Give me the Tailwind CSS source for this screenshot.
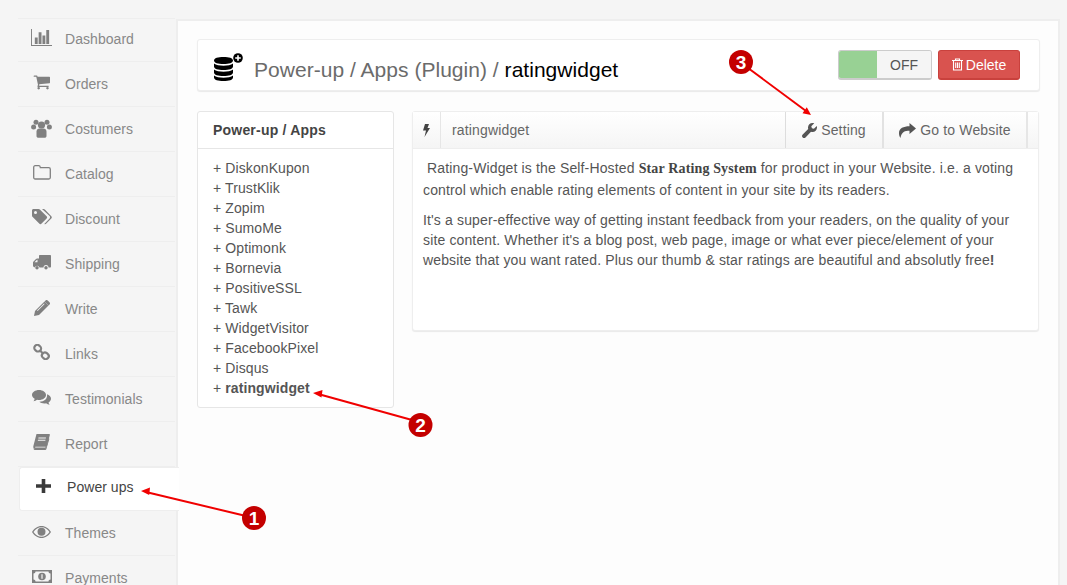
<!DOCTYPE html>
<html lang="en">
<head>
    <title>Power-up / Apps</title>
    <meta charset="utf-8"/>
    <meta name="viewport" content="width=device-width, initial-scale=1">
    <script src="https://cdn.jsdelivr.net/npm/@tailwindcss/browser@4"></script>
</head>
<body class="relative h-[585px] w-[1067px] overflow-hidden bg-[#f5f5f5] font-['Liberation_Sans',Arial,sans-serif] text-sm text-[#555]">
<div class="flex h-full items-start">
    <!-- sidebar -->
    <div class="w-[175px] shrink-0 pl-[18px] pt-[18px] tracking-[0.05px] text-[#888]">
        <div class="flex h-[44px] items-center border-y border-[#eee] pb-[2px]">
            <div class="flex w-[47px] justify-center">
                <svg class="mb-[3px] h-[17px] w-[21px]" viewBox="0 0 22 16" preserveAspectRatio="none" fill="#808080"><path d="M0 0h1v15h21v1H0z"/><path d="M4 8h3v6H4zM8 3h3v11H8zM12 6h3v8h-3zM16 1h3v13h-3z"/></svg>
            </div>
            <span>Dashboard</span>
        </div>
        <div class="flex h-[45px] items-center border-b border-[#eee] pb-[1px]">
            <div class="flex w-[47px] justify-center">
                <svg class="mb-[2px] h-[15px] w-[17px]" viewBox="0 256 1728 1408" fill="#808080"><path d="M704 1536q0 52-38 90t-90 38-90-38-38-90 38-90 90-38 90 38 38 90zm896 0q0 52-38 90t-90 38-90-38-38-90 38-90 90-38 90 38 38 90zm128-1088v512q0 24-16.5 42.5t-40.5 21.5l-1044 122q13 60 13 70 0 16-24 64h920q26 0 45 19t19 45-19 45-45 19h-1024q-26 0-45-19t-19-45q0-11 8-31.5t16-36 21.5-40 15.5-29.5l-177-823h-204q-26 0-45-19t-19-45 19-45 45-19h256q16 0 28.5 6.5t19.5 15.5 13 24.5 8 26 5.5 29.5 4.5 26h1201q26 0 45 19t19 45z"/></svg>
            </div>
            <span>Orders</span>
        </div>
        <div class="flex h-[45px] items-center border-b border-[#eee] pb-[1px]">
            <div class="flex w-[47px] justify-center">
                <svg class="mb-[1px] h-[19px] w-[21px]" viewBox="0 0 21 19" fill="#808080"><circle cx="5" cy="3.200" r="2.500"/><circle cx="16" cy="3.200" r="2.500"/><circle cx="10.500" cy="6" r="3.600"/><circle cx="2.600" cy="8" r="2.500"/><circle cx="18.400" cy="8" r="2.500"/><path d="M5.500 12.500c0-2 1.500-3 3-3h4c1.500 0 3 1 3 3V17c0 1-.8 1.800-2 1.800h-6c-1.200 0-2-.8-2-1.800z"/></svg>
            </div>
            <span>Costumers</span>
        </div>
        <div class="flex h-[45px] items-center border-b border-[#eee] pb-[1px]">
            <div class="flex w-[47px] justify-center">
                <svg class="mb-[3px] h-[15px] w-[18px]" viewBox="0 0 18 15" fill="none" stroke="#808080" stroke-width="1.300"><path d="M.7 12.500V2.200C.7 1.300 1.300.7 2.200.7h3.600c.8 0 1.300.5 1.400 1.300l.1.700h8.500c.9 0 1.500.6 1.500 1.500v8.300c0 .9-.6 1.500-1.500 1.500H2.200c-.9 0-1.500-.6-1.500-1.500z"/></svg>
            </div>
            <span>Catalog</span>
        </div>
        <div class="flex h-[45px] items-center border-b border-[#eee] pb-[1px]">
            <div class="flex w-[47px] justify-center">
                <svg class="mb-[3px] h-[16px] w-[20px]" viewBox="0 0 20 16" fill="#808080"><path d="M0 1.500C0 .6.600 0 1.500 0h5c.7 0 1.200.3 1.600.7l6.500 6.500c.7.700.7 1.700 0 2.400l-5 5c-.7.700-1.700.7-2.400 0L.7 8.100C.3 7.700 0 7.200 0 6.500zM3.500 2A1.500 1.500 0 1 0 3.500 5 1.500 1.500 0 0 0 3.500 2z"/><path d="M10 0h1.500c.7 0 1.200.3 1.600.7l6.200 6.500c.7.700.7 1.700 0 2.400l-5 5c-.6.600-1.400.7-2 .3l5.300-5.400c.7-.7.700-1.700 0-2.400z"/></svg>
            </div>
            <span>Discount</span>
        </div>
        <div class="flex h-[45px] items-center border-b border-[#eee] pb-[1px]">
            <div class="flex w-[47px] justify-center">
                <svg class="mb-[3px] h-[15px] w-[18px]" viewBox="0 0 18 15" fill="#808080"><path fill-rule="evenodd" d="M6 1c0-.6.4-1 1-1h10c.6 0 1 .4 1 1v10.500c0 .6-.4 1-1 1h-1.500a2.500 2.500 0 0 0-5 0H6.500a2.500 2.500 0 0 0-4.700-.2C.8 12.300 0 11.700 0 10.800V7.500c0-.5.200-.8.500-1.100L3 4c.3-.3.600-.5 1.100-.5H6zM1.500 7.200h3V4.800H4z"/><circle cx="4" cy="12.800" r="1.700"/><circle cx="13" cy="12.800" r="1.700"/></svg>
            </div>
            <span>Shipping</span>
        </div>
        <div class="flex h-[45px] items-center border-b border-[#eee] pb-[1px]">
            <div class="flex w-[47px] justify-center">
                <svg class="mb-[2px] h-[16px] w-[16px]" viewBox="0 0 16 16" fill="#808080"><path d="M0 16l1-5L10.500 1.500l4 4L5 15z"/><path d="M11.500.5c.7-.7 1.500-.7 2.200 0l1.800 1.800c.7.7.7 1.500 0 2.200l-.9.9-4-4z"/><path d="M3 10.500l7-7 .6.600-7 7z" fill="#f5f5f5"/></svg>
            </div>
            <span>Write</span>
        </div>
        <div class="flex h-[45px] items-center border-b border-[#eee] pb-[1px]">
            <div class="flex w-[47px] justify-center">
                <svg class="mb-[3px] h-[16px] w-[17px]" viewBox="0 0 17 16" fill="none" stroke="#808080" stroke-width="2.200"><rect x="1.200" y="1.200" width="7" height="6" rx="3" transform="rotate(40 4.700 4.200)"/><rect x="8.800" y="8.800" width="7" height="6" rx="3" transform="rotate(40 12.300 11.800)"/><path d="M6.500 6l4 4"/></svg>
            </div>
            <span>Links</span>
        </div>
        <div class="flex h-[45px] items-center border-b border-[#eee] pb-[1px]">
            <div class="flex w-[47px] justify-center">
                <svg class="mb-[2px] h-[16px] w-[19px]" viewBox="0 0 19 16" fill="#808080"><path d="M7 0c3.900 0 7 2.200 7 5s-3.100 5-7 5c-.7 0-1.300-.1-1.900-.2C4 10.600 2.900 11.100 1.500 11.300c.6-.8 1-1.600 1.200-2.500C1 7.900 0 6.500 0 5c0-2.800 3.100-5 7-5z"/><path d="M15 4.300c2.300.8 4 2.400 4 4.400 0 1.500-1 2.800-2.500 3.700.2.900.6 1.600 1.200 2.400-1.400-.2-2.600-.7-3.600-1.500-.6.100-1.200.2-1.800.2-2 0-3.800-.7-5-1.700 4.600.1 8.500-2.800 7.700-7.500z"/></svg>
            </div>
            <span>Testimonials</span>
        </div>
        <div class="flex h-[45px] items-center border-b border-[#eee] pb-[1px]">
            <div class="flex w-[47px] justify-center">
                <svg class="mb-[3px] h-[16px] w-[17px]" viewBox="0 0 17 16" fill="#808080"><path d="M3.500 0H16c.7 0 1 .5.800 1.200l-3.300 12.300c-.3.900-.8 1.500-1.800 1.500H2.500C1 15 0 14 .3 12.300z"/><path d="M15.500 4l.9.700-3 10.300c-.2.700-.8 1-1.500 1H2.500C1.500 16 .6 15.500.4 14.500h11.300c.9 0 1.300-.4 1.500-1.100z"/><path d="M2.300 12.800h10.300l-.2.800H2.100zM5.500 3.500h7.500l-.2.900H5.300zM5 5.800h7.500l-.2.900H4.800z" fill="#f5f5f5"/></svg>
            </div>
            <span>Report</span>
        </div>
        <!-- active row pokes out over the panel border -->
        <div class="relative z-10 ml-px flex h-[44px] w-[160px] items-center rounded-l-[3px] border-y border-l border-[#eee] bg-white pb-[4px] text-[#444]">
            <div class="flex w-[47px] justify-center">
                <svg class="mb-[3px] h-[14px] w-[15px]" viewBox="0 0 15 14" fill="#3a3a3a"><path d="M5.700 0h3.600v5.200H15v3.600H9.300V14H5.700V8.800H0V5.200h5.700z"/></svg>
            </div>
            <span>Power ups</span>
        </div>
        <div class="flex h-[45px] items-center border-b border-[#eee] pb-[1px]">
            <div class="flex w-[47px] justify-center">
                <svg class="mb-[2px] h-[12px] w-[19px]" viewBox="0 0 19 12" fill="#808080"><path fill-rule="evenodd" d="M9.500 0c4 0 7.300 2.500 9.500 6-2.200 3.500-5.500 6-9.500 6S2.200 9.500 0 6C2.200 2.500 5.500 0 9.500 0zM9.500 1.200C6.300 1.200 3.500 3.100 1.500 6c2 2.900 4.800 4.800 8 4.800s6-1.900 8-4.800c-2-2.900-4.800-4.800-8-4.800z"/><circle cx="9.500" cy="5.800" r="4"/></svg>
            </div>
            <span>Themes</span>
        </div>
        <!-- last row is cut off by the window in the reference -->
        <div class="flex h-[30px] items-start pt-[14px]">
            <div class="flex w-[47px] justify-center">
                <svg class="h-[13px] w-[20px]" viewBox="0 0 20 13"><rect width="20" height="13" fill="#808080"/><path d="M1.500 3.500c1.200 0 2-.8 2-2h13c0 1.200.8 2 2 2v6c-1.200 0-2 .8-2 2h-13c0-1.200-.8-2-2-2z" fill="#f5f5f5"/><circle cx="10" cy="6.500" r="3.800" fill="#808080"/><path d="M9.400 4.200h1.200v4.600H9.400z" fill="#f5f5f5"/></svg>
            </div>
            <span class="leading-[16px]">Payments</span>
        </div>
    </div>

    <!-- main panel -->
    <div class="ml-px mt-[19px] h-[566px] w-[884px] shrink-0 border-x-2 border-t-2 border-[#eee] bg-[#fdfdfd] px-[19px] pt-[18px]">
        <div class="flex h-[52px] w-[843px] items-center rounded-[3px] border border-[#eee] bg-white shadow-[0_1px_1px_rgba(0,0,0,0.08)]">
            <svg class="ml-[16px] mt-[3px] h-[28px] w-[29px] shrink-0" viewBox="0 0 29 28" fill="#000"><path d="M0 7.500C0 5 4 4 9.500 4S19 5 19 7.500 15 11 9.500 11 0 10 0 7.500zM0 10.500c2 1.700 5.500 2.200 9.500 2.200s7.500-.5 9.500-2.200v3c0 2.500-4 3.500-9.500 3.500S0 16 0 13.500zM0 16.500c2 1.700 5.500 2.200 9.500 2.200s7.500-.5 9.500-2.200v3c0 2.500-4 3.500-9.500 3.500S0 22 0 19.500zM0 22.500c2 1.700 5.500 2.200 9.500 2.200s7.500-.5 9.500-2.200v2c0 2.500-4 3.500-9.500 3.500S0 27 0 24.500z"/><circle cx="24" cy="5" r="4.800"/><path d="M23.200 2.300h1.600v2h2v1.500h-2v2h-1.600v-2h-2V4.300h2z" fill="#fff"/></svg>
            <h1 class="ml-[11px] mt-[9px] text-[21px] leading-none tracking-[0.03px] text-[#6b6b6b]">Power-up / Apps (Plugin) / <span class="text-black">ratingwidget</span></h1>
            <div class="ml-auto mr-[19px] flex items-center gap-[6px]">
                <div class="flex h-[30px] w-[94px] overflow-hidden rounded-[3px] border border-b-2 border-[#ccc]">
                    <div class="w-[38px] bg-[#98d194]"></div>
                    <div class="flex-1 bg-[#f5f5f5] text-center leading-[28px] text-[#555]">OFF</div>
                </div>
                <div class="flex h-[30px] w-[82px] items-center justify-center gap-[3px] rounded-[3px] border border-b-2 border-[#c9413d] bg-[#d9534f] text-white">
                    <svg class="h-[13px] w-[11px]" viewBox="0 0 11 13" fill="none" stroke="#fff" stroke-width="1.100"><path d="M0 2.500h11M3.500 2.500V1h4v1.500M1.500 2.500v9.500h8V2.500M3.700 4.500v5.500M5.500 4.500v5.500M7.300 4.500v5.500"/></svg>
                    <span>Delete</span>
                </div>
            </div>
        </div>

        <div class="mt-[20px] flex items-start gap-[18px]">
            <!-- list -->
            <div class="w-[197px] shrink-0 rounded-[3px] border border-[#e6e6e6] bg-white pb-[9px]">
                <div class="h-[37px] border-b border-[#e6e6e6] pl-[15px] font-bold leading-[36px] tracking-[0.2px] text-[#444]">Power-up / Apps</div>
                <ul class="mt-[9px] pl-[15px] leading-[20px] tracking-[0.1px]">
                    <li>+ DiskonKupon</li>
                    <li>+ TrustKlik</li>
                    <li>+ Zopim</li>
                    <li>+ SumoMe</li>
                    <li>+ Optimonk</li>
                    <li>+ Bornevia</li>
                    <li>+ PositiveSSL</li>
                    <li>+ Tawk</li>
                    <li>+ WidgetVisitor</li>
                    <li>+ FacebookPixel</li>
                    <li>+ Disqus</li>
                    <li>+ <b>ratingwidget</b></li>
                </ul>
            </div>
            <!-- detail -->
            <div class="h-[220px] w-[627px] shrink-0 rounded-[3px] border border-[#eee] bg-white shadow-[0_1px_1px_rgba(0,0,0,0.08)]">
                <div class="flex h-[37px] items-stretch border-b border-[#eee] bg-gradient-to-b from-white to-[#f5f5f5] leading-[36px] tracking-[0.15px] text-[#666]">
                    <div class="flex w-[28px] items-center justify-center border-r border-[#e6e6e6]">
                        <svg class="h-[13px] w-[7px]" viewBox="0 0 7 13" fill="#444"><path d="M2 0h4L4.500 4H7L1.500 13 3 6.500H0z"/></svg>
                    </div>
                    <div class="w-[344px] pl-[11px]">ratingwidget</div>
                    <div class="flex w-[97px] items-center justify-center gap-[4px] border-l border-[#ddd]">
                        <svg class="h-[15px] w-[15px]" viewBox="0 0 15 15" fill="#555"><path d="M10.500 0c.6 0 1.200.1 1.700.3L9.300 3.200l.6 2 2 .6L14.800 3c.2.5.2 1 .2 1.500C15 7 13 9 10.500 9c-.5 0-1-.1-1.500-.2L3.500 14.400c-.8.800-2 .8-2.800 0-.9-.8-.9-2 0-2.900L6.200 6C6.100 5.500 6 5 6 4.500 6 2 8 0 10.500 0z"/></svg>
                        <span>Setting</span>
                    </div>
                    <div class="flex w-[146px] items-center justify-center gap-[4px] border-x-2 border-[#e2e2e2] border-r-[#e6e6e6]">
                        <svg class="h-[15px] w-[17px]" viewBox="0 0 17 15" fill="#555"><path d="M10.500 0L17 5.500 10.500 11V7.700C6 7.700 2.500 8.500 1.500 15 .3 13.200 0 11.800 0 10c0-5 4.500-6.700 10.500-6.800z"/></svg>
                        <span>Go to Website</span>
                    </div>
                </div>
                <div class="px-[10px] pt-[9px] tracking-[0.14px]">
                    <p class="leading-[21.5px]">&nbsp;Rating-Widget is the Self-Hosted <b class="font-['Liberation_Serif',serif] text-[#444]">Star Rating System</b> for product in your Website. i.e. a voting control which enable rating elements of content in your site by its readers.</p>
                    <p class="mt-[9px] leading-[20px]">It's a super-effective way of getting instant feedback from your readers, on the quality of your site content. Whether it's a blog post, web page, image or what ever piece/element of your website that you want rated. Plus our thumb &amp; star ratings are beautiful and absolutly free<b>!</b></p>
                </div>
            </div>
        </div>
    </div>
</div>

<!-- callout arrows over the page -->
<svg class="pointer-events-none absolute inset-0 z-20 h-[585px] w-[1067px]" viewBox="0 0 1067 585">
    <g stroke="#f00000" stroke-width="2" fill="none">
        <path d="M246 516L148 492.500"/>
        <path d="M412 420L320 394.500"/>
        <path d="M748 68L806 111"/>
    </g>
    <g fill="#f00000">
        <path d="M141 491l9-3.500-.8 7.500z"/>
        <path d="M313 393l9.500-3-1 7.500z"/>
        <path d="M811 115l-8.500-1.700 4.300-6z"/>
    </g>
    <g fill="#c40000">
        <circle cx="254" cy="518" r="12"/>
        <circle cx="420.500" cy="425" r="12"/>
        <circle cx="741" cy="62" r="12"/>
    </g>
    <g fill="#fff" font-family="Liberation Sans, Arial, sans-serif" font-weight="700" font-size="19" text-anchor="middle">
        <text x="254" y="525">1</text>
        <text x="420.500" y="432">2</text>
        <text x="741" y="69">3</text>
    </g>
</svg>
</body>
</html>
